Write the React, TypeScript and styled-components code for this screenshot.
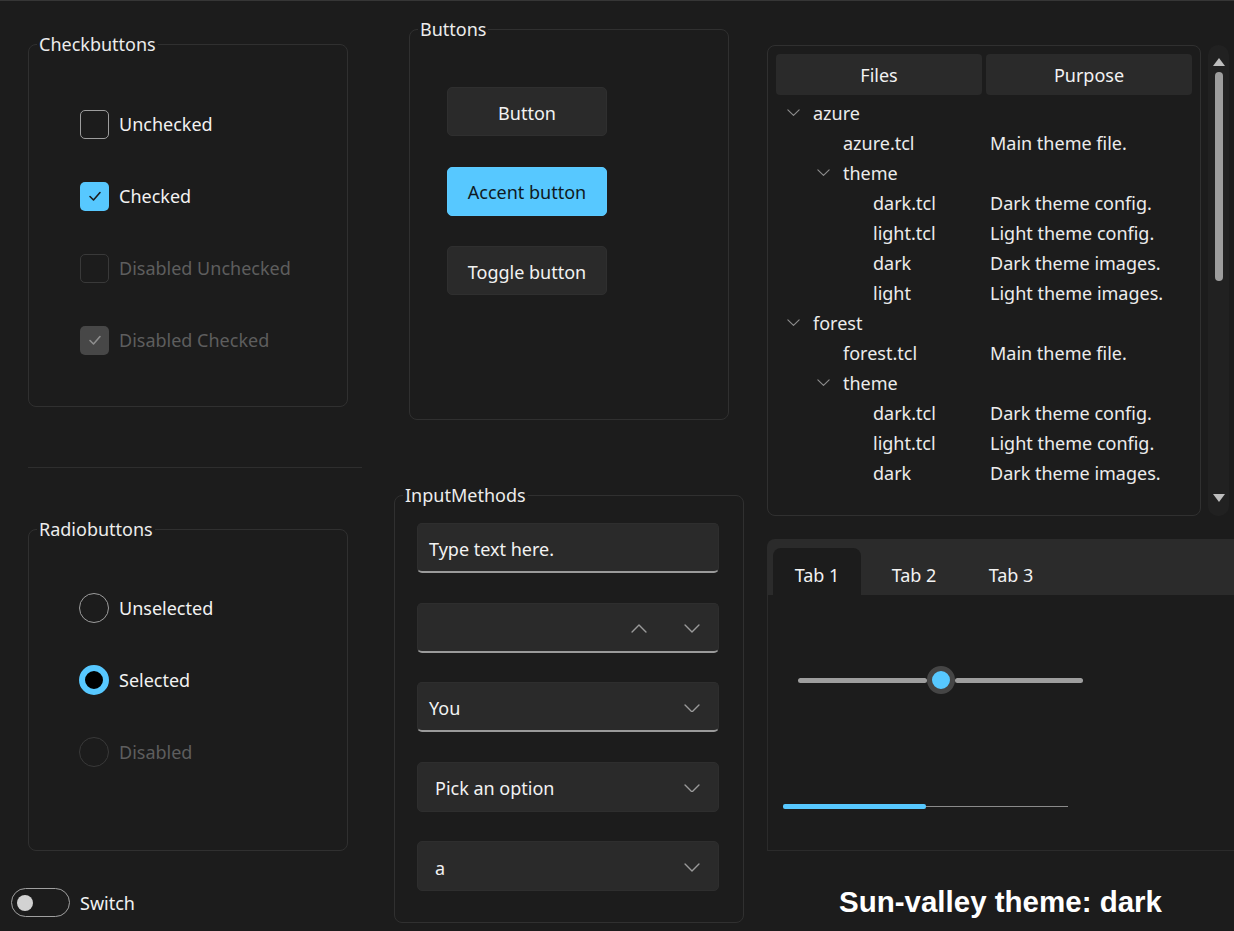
import React from 'react';
import styled, { createGlobalStyle } from 'styled-components';

const ACCENT = '#57c8ff';
const TEXT = '#f2f2f2';
const DIM = '#5e5e5e';
const LINE = '#303030';

const GlobalStyle = createGlobalStyle`
  html, body {
    margin: 0;
    padding: 0;
    background: #1c1c1c;
  }
  body {
    font-family: 'Noto Sans', 'Open Sans', sans-serif;
    color: ${TEXT};
  }
`;

type TreeItem = { level: number; name: string; purpose?: string; open?: boolean };

const treeItems: TreeItem[] = [
  { level: 0, name: 'azure', open: true },
  { level: 1, name: 'azure.tcl', purpose: 'Main theme file.' },
  { level: 1, name: 'theme', open: true },
  { level: 2, name: 'dark.tcl', purpose: 'Dark theme config.' },
  { level: 2, name: 'light.tcl', purpose: 'Light theme config.' },
  { level: 2, name: 'dark', purpose: 'Dark theme images.' },
  { level: 2, name: 'light', purpose: 'Light theme images.' },
  { level: 0, name: 'forest', open: true },
  { level: 1, name: 'forest.tcl', purpose: 'Main theme file.' },
  { level: 1, name: 'theme', open: true },
  { level: 2, name: 'dark.tcl', purpose: 'Dark theme config.' },
  { level: 2, name: 'light.tcl', purpose: 'Light theme config.' },
  { level: 2, name: 'dark', purpose: 'Dark theme images.' },
];

const SLIDER_WIDTH = 285;
const THUMB_SIZE = 28;
const sliderValue = 0.5;
const progressValue = 0.5;

const ChevronDown = ({ color = '#9a9a9a', w = 16 }: { color?: string; w?: number }) => (
  <svg width={w} height={w * 0.56} viewBox='0 0 16 9' fill='none'>
    <path d='M1 1 L8 8 L15 1' stroke={color} strokeWidth='1.4' strokeLinecap='round' strokeLinejoin='round' />
  </svg>
);

const ChevronUp = ({ color = '#9a9a9a', w = 16 }: { color?: string; w?: number }) => (
  <svg width={w} height={w * 0.56} viewBox='0 0 16 9' fill='none'>
    <path d='M1 8 L8 1 L15 8' stroke={color} strokeWidth='1.4' strokeLinecap='round' strokeLinejoin='round' />
  </svg>
);

const Check = ({ color }: { color: string }) => (
  <svg width='16' height='16' viewBox='0 0 16 16' fill='none'>
    <path d='M3 8.5 L6.5 12 L13 4.5' stroke={color} strokeWidth='1.6' strokeLinecap='round' strokeLinejoin='round' />
  </svg>
);

const App: React.FC = () => {
  return (
    <>
      <GlobalStyle />
      <Window>
        <Column $top={31}>
          <Frame $width={320} $left={28}>
            <Legend>Checkbuttons</Legend>
            <FrameBody $pad='32px 0 30px 51px'>
              <CheckRow>
                <CheckBox />
                Unchecked
              </CheckRow>
              <CheckRow>
                <CheckBox $checked>
                  <Check color='#1c1c1c' />
                </CheckBox>
                Checked
              </CheckRow>
              <CheckRow $disabled>
                <CheckBox $disabled />
                Disabled Unchecked
              </CheckRow>
              <CheckRow $disabled>
                <CheckBox $checked $disabled>
                  <Check color='#8e8e8e' />
                </CheckBox>
                Disabled Checked
              </CheckRow>
            </FrameBody>
          </Frame>

          <Separator />

          <Frame $width={320} $left={28} $top={49}>
            <Legend>Radiobuttons</Legend>
            <FrameBody $pad='31px 0 62px 50px'>
              <CheckRow>
                <Radio />
                Unselected
              </CheckRow>
              <CheckRow>
                <Radio $selected />
                Selected
              </CheckRow>
              <CheckRow $disabled>
                <Radio $disabled />
                Disabled
              </CheckRow>
            </FrameBody>
          </Frame>

          <SwitchRow>
            <SwitchTrack>
              <SwitchKnob />
            </SwitchTrack>
            Switch
          </SwitchRow>
        </Column>

        <Column $top={16}>
          <Frame $width={320} $left={29}>
            <Legend>Buttons</Legend>
            <FrameBody $pad='46px 0 124px 37px'>
              <ButtonStack>
                <Button>Button</Button>
                <Button $accent>Accent button</Button>
                <Button>Toggle button</Button>
              </ButtonStack>
            </FrameBody>
          </Frame>

          <Frame $width={350} $left={14} $top={63}>
            <Legend>InputMethods</Legend>
            <FrameBody $pad='16px 0 31px 22px'>
              <InputStack>
                <Field $underline>
                  <FieldText>Type text here.</FieldText>
                </Field>
                <Field $underline>
                  <FieldText />
                  <Arrows>
                    <ChevronUp />
                    <ChevronDown />
                  </Arrows>
                </Field>
                <Field $underline>
                  <FieldText>You</FieldText>
                  <ChevronDown />
                </Field>
                <Field>
                  <FieldText $inset>Pick an option</FieldText>
                  <ChevronDown />
                </Field>
                <Field>
                  <FieldText $inset>a</FieldText>
                  <ChevronDown />
                </Field>
              </InputStack>
            </FrameBody>
          </Frame>
        </Column>

        <Column $top={44}>
          <TreeArea>
            <TreeFrame>
              <Headings>
                <Heading>Files</Heading>
                <Heading>Purpose</Heading>
              </Headings>
              <TreeBody>
                {treeItems.map((item, i) => (
                  <TreeRow key={i}>
                    <TreeName $level={item.level}>
                      <Toggle>{item.open && <ChevronDown color='#8c8c8c' w={13} />}</Toggle>
                      {item.name}
                    </TreeName>
                    <span>{item.purpose}</span>
                  </TreeRow>
                ))}
              </TreeBody>
            </TreeFrame>
            <Scrollbar>
              <ArrowUp />
              <Thumb />
              <Spacer />
              <ArrowDown />
            </Scrollbar>
          </TreeArea>

          <Notebook>
            <TabBar>
              <Tab $active>Tab 1</Tab>
              <Tab>Tab 2</Tab>
              <Tab>Tab 3</Tab>
            </TabBar>
            <TabPanel>
              <Slider>
                <SliderTrack style={{ width: `${sliderValue * (SLIDER_WIDTH - THUMB_SIZE)}px` }} />
                <SliderThumb />
                <SliderTrack style={{ flex: 1 }} />
              </Slider>
              <Progress>
                <ProgressFill style={{ width: `${progressValue * 100}%` }} />
              </Progress>
            </TabPanel>
          </Notebook>

          <Title>Sun-valley theme: dark</Title>
        </Column>
      </Window>
    </>
  );
};

export default App;

const Window = styled.div`
  width: 1234px;
  height: 931px;
  box-sizing: border-box;
  border-top: 1px solid #363636;
  background: #1c1c1c;
  display: grid;
  grid-template-columns: 380px 387px 467px;
  overflow: hidden;
  font-size: 18px;
  line-height: 24px;
`;

const Column = styled.div<{ $top: number }>`
  display: flex;
  flex-direction: column;
  align-items: flex-start;
  padding-top: ${(p) => p.$top}px;
  min-width: 0;
`;

const Frame = styled.fieldset<{ $width: number; $left: number; $top?: number }>`
  box-sizing: border-box;
  width: ${(p) => p.$width}px;
  min-width: 0;
  margin: ${(p) => p.$top || 0}px 0 0 ${(p) => p.$left}px;
  padding: 0;
  border: 1px solid ${LINE};
  border-radius: 8px;
`;

const Legend = styled.legend`
  margin-left: 8px;
  padding: 0 2px;
  font-size: 18px;
  line-height: 24px;
  color: #ececec;
`;

const FrameBody = styled.div<{ $pad: string }>`
  padding: ${(p) => p.$pad};
`;

const CheckRow = styled.div<{ $disabled?: boolean }>`
  height: 72px;
  display: flex;
  align-items: center;
  gap: 10px;
  color: ${(p) => (p.$disabled ? DIM : TEXT)};
`;

const CheckBox = styled.span<{ $checked?: boolean; $disabled?: boolean }>`
  box-sizing: border-box;
  width: 29px;
  height: 29px;
  border-radius: 5px;
  display: flex;
  align-items: center;
  justify-content: center;
  border: ${(p) =>
    p.$checked
      ? 'none'
      : p.$disabled
        ? '1.5px solid #393939'
        : '1.5px solid #9d9d9d'};
  background: ${(p) =>
    p.$checked ? (p.$disabled ? '#474747' : ACCENT) : 'transparent'};
`;

const Radio = styled.span<{ $selected?: boolean; $disabled?: boolean }>`
  box-sizing: border-box;
  width: 30px;
  height: 30px;
  border-radius: 50%;
  border: ${(p) =>
    p.$selected
      ? `6px solid ${ACCENT}`
      : p.$disabled
        ? '1.5px solid #393939'
        : '1.5px solid #9d9d9d'};
  background: ${(p) => (p.$selected ? '#000' : 'transparent')};
`;

const Separator = styled.div`
  width: 334px;
  height: 1px;
  margin: 60px 0 0 28px;
  background: #2e2e2e;
`;

const SwitchRow = styled.div`
  margin: 37px 0 0 11px;
  display: flex;
  align-items: center;
  gap: 10px;
  color: ${TEXT};
`;

const SwitchTrack = styled.span`
  box-sizing: border-box;
  width: 59px;
  height: 29px;
  border-radius: 15px;
  border: 1.5px solid #a0a0a0;
  display: flex;
  align-items: center;
  padding-left: 4.5px;
`;

const SwitchKnob = styled.span`
  width: 16px;
  height: 16px;
  border-radius: 50%;
  background: #d2d2d2;
`;

const ButtonStack = styled.div`
  display: flex;
  flex-direction: column;
  gap: 30.5px;
`;

const Button = styled.div<{ $accent?: boolean }>`
  box-sizing: border-box;
  width: 160px;
  height: 49px;
  padding-top: 2px;
  border-radius: 5px;
  display: flex;
  align-items: center;
  justify-content: center;
  background: ${(p) => (p.$accent ? ACCENT : '#2a2a2a')};
  border: 1px solid ${(p) => (p.$accent ? '#5ccaff' : '#2f2f2f')};
  color: ${(p) => (p.$accent ? '#0f1a22' : TEXT)};
`;

const InputStack = styled.div`
  display: flex;
  flex-direction: column;
  gap: 29.5px;
`;

const Field = styled.div<{ $underline?: boolean }>`
  box-sizing: border-box;
  width: 302px;
  height: 50px;
  border-radius: 5px;
  background: #2a2a2a;
  border: 1px solid #2e2e2e;
  border-bottom: ${(p) => (p.$underline ? '2px solid #9a9a9a' : '1px solid #2e2e2e')};
  display: flex;
  align-items: center;
  padding: 3px 18px 0 11px;
`;

const FieldText = styled.span<{ $inset?: boolean }>`
  flex: 1;
  padding-left: ${(p) => (p.$inset ? 6 : 0)}px;
  color: ${TEXT};
`;

const Arrows = styled.span`
  display: flex;
  align-items: center;
  gap: 37px;
`;

const TreeArea = styled.div`
  display: flex;
  gap: 7px;
  height: 471px;
`;

const TreeFrame = styled.div`
  box-sizing: border-box;
  width: 434px;
  height: 100%;
  border: 1px solid ${LINE};
  border-radius: 8px;
  padding: 8px;
  overflow: hidden;
`;

const Headings = styled.div`
  display: grid;
  grid-template-columns: 206px 206px;
  gap: 4px;
`;

const Heading = styled.div`
  height: 41px;
  border-radius: 4px;
  background: #2a2a2a;
  display: flex;
  align-items: center;
  justify-content: center;
  color: ${TEXT};
`;

const TreeBody = styled.div`
  margin-top: 3px;
`;

const TreeRow = styled.div`
  display: grid;
  grid-template-columns: 214px 1fr;
  height: 30px;
  align-items: center;
  color: #ececec;
  white-space: nowrap;
`;

const TreeName = styled.span<{ $level: number }>`
  display: flex;
  align-items: center;
  padding-left: ${(p) => 11 + p.$level * 30}px;
`;

const Toggle = styled.span`
  width: 14px;
  margin-right: 12px;
  display: flex;
  align-items: center;
`;

const Scrollbar = styled.div`
  box-sizing: border-box;
  width: 21px;
  height: 100%;
  border-radius: 10px;
  background: #212121;
  display: flex;
  flex-direction: column;
  align-items: center;
  padding: 13px 0 14px;
`;

const ArrowUp = styled.span`
  width: 0;
  height: 0;
  border-left: 6px solid transparent;
  border-right: 6px solid transparent;
  border-bottom: 8px solid #bdbdbd;
`;

const ArrowDown = styled.span`
  width: 0;
  height: 0;
  border-left: 6px solid transparent;
  border-right: 6px solid transparent;
  border-top: 8px solid #bdbdbd;
`;

const Thumb = styled.span`
  margin-top: 6px;
  width: 8px;
  height: 209px;
  border-radius: 4px;
  background: #9d9d9d;
`;

const Spacer = styled.span`
  flex: 1;
`;

const Notebook = styled.div`
  margin-top: 23px;
  width: 467px;
  height: 312px;
  display: flex;
  flex-direction: column;
`;

const TabBar = styled.div`
  height: 56px;
  background: #2b2b2b;
  border-radius: 8px 0 0 0;
  display: flex;
  align-items: flex-end;
  gap: 9px;
  padding-left: 6px;
`;

const Tab = styled.div<{ $active?: boolean }>`
  width: 88px;
  height: 47px;
  padding-top: 7px;
  box-sizing: border-box;
  border-radius: 8px 8px 0 0;
  background: ${(p) => (p.$active ? '#1c1c1c' : 'transparent')};
  display: flex;
  align-items: center;
  justify-content: center;
  color: ${TEXT};
`;

const TabPanel = styled.div`
  flex: 1;
  background: #1c1c1c;
  border-left: 1px solid #2b2b2b;
  border-bottom: 1px solid #2b2b2b;
  display: flex;
  flex-direction: column;
  align-items: flex-start;
  padding: 71px 0 0 15px;
`;

const Slider = styled.div`
  margin-left: 15px;
  width: ${SLIDER_WIDTH}px;
  height: ${THUMB_SIZE}px;
  display: flex;
  align-items: center;
`;

const SliderTrack = styled.span`
  height: 5px;
  border-radius: 3px;
  background: #9e9e9e;
`;

const SliderThumb = styled.span`
  box-sizing: border-box;
  width: ${THUMB_SIZE}px;
  height: ${THUMB_SIZE}px;
  border-radius: 50%;
  border: 5.5px solid #454545;
  background: ${ACCENT};
`;

const Progress = styled.div`
  margin-top: 110px;
  width: ${SLIDER_WIDTH}px;
  height: 5px;
  display: flex;
  align-items: center;
  background: linear-gradient(#8a8a8a, #8a8a8a) center / 100% 1px no-repeat;
`;

const ProgressFill = styled.span`
  height: 4.5px;
  border-radius: 2px;
  background: ${ACCENT};
`;

const Title = styled.div`
  align-self: stretch;
  margin-top: 34px;
  text-align: center;
  font-family: 'Liberation Sans', Arial, sans-serif;
  font-weight: 700;
  font-size: 29.5px;
  line-height: 34px;
  color: #ffffff;
`;
